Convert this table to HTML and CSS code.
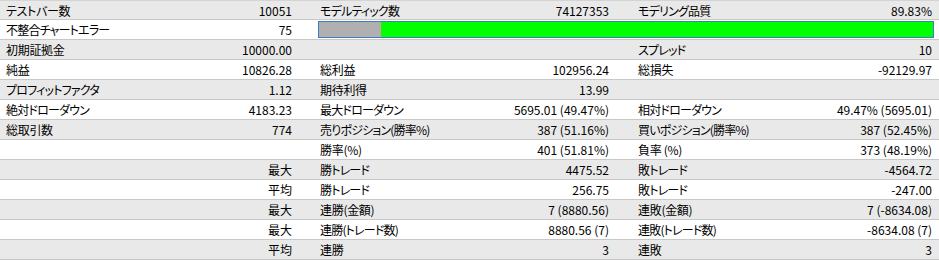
FILE: index.html
```html
<!DOCTYPE html>
<html lang="ja">
<head>
<meta charset="utf-8">
<link rel="stylesheet" href="styles.css">
</head>
<body>
<div class="report">
  <div class="row grey first">
    <div class="sec s1"><span class="lbl">テストバー数</span><span class="val">10051</span></div>
    <div class="sec s2"><span class="lbl kana">モデルティック数</span><span class="val">74127353</span></div>
    <div class="sec s3"><span class="lbl kana">モデリング品質</span><span class="val">89.83%</span></div>
  </div>
  <div class="row white">
    <div class="sec s1"><span class="lbl kana">不整合チャートエラー</span><span class="val">75</span></div>
    <div class="bar"><div class="bar-bad"></div><div class="bar-good"></div></div>
  </div>
  <div class="row grey">
    <div class="sec s1"><span class="lbl">初期証拠金</span><span class="val">10000.00</span></div>
    <div class="sec s2"><span class="lbl"></span><span class="val"></span></div>
    <div class="sec s3"><span class="lbl kana">スプレッド</span><span class="val">10</span></div>
  </div>
  <div class="row white">
    <div class="sec s1"><span class="lbl">純益</span><span class="val">10826.28</span></div>
    <div class="sec s2"><span class="lbl">総利益</span><span class="val">102956.24</span></div>
    <div class="sec s3"><span class="lbl">総損失</span><span class="val">-92129.97</span></div>
  </div>
  <div class="row grey">
    <div class="sec s1"><span class="lbl kana">プロフィットファクタ</span><span class="val">1.12</span></div>
    <div class="sec s2"><span class="lbl">期待利得</span><span class="val">13.99</span></div>
    <div class="sec s3"><span class="lbl"></span><span class="val"></span></div>
  </div>
  <div class="row white">
    <div class="sec s1"><span class="lbl kana">絶対ドローダウン</span><span class="val">4183.23</span></div>
    <div class="sec s2"><span class="lbl kana">最大ドローダウン</span><span class="val">5695.01 (49.47%)</span></div>
    <div class="sec s3"><span class="lbl kana">相対ドローダウン</span><span class="val">49.47% (5695.01)</span></div>
  </div>
  <div class="row grey">
    <div class="sec s1"><span class="lbl">総取引数</span><span class="val">774</span></div>
    <div class="sec s2"><span class="lbl kana">売りポジション(勝率%)</span><span class="val">387 (51.16%)</span></div>
    <div class="sec s3"><span class="lbl kana">買いポジション(勝率%)</span><span class="val">387 (52.45%)</span></div>
  </div>
  <div class="row white">
    <div class="sec s1"><span class="lbl"></span><span class="val"></span></div>
    <div class="sec s2"><span class="lbl">勝率(%)</span><span class="val">401 (51.81%)</span></div>
    <div class="sec s3"><span class="lbl">負率 (%)</span><span class="val">373 (48.19%)</span></div>
  </div>
  <div class="row grey">
    <div class="sec s1"><span class="lbl"></span><span class="val">最大</span></div>
    <div class="sec s2"><span class="lbl kana">勝トレード</span><span class="val">4475.52</span></div>
    <div class="sec s3"><span class="lbl kana">敗トレード</span><span class="val">-4564.72</span></div>
  </div>
  <div class="row white">
    <div class="sec s1"><span class="lbl"></span><span class="val">平均</span></div>
    <div class="sec s2"><span class="lbl kana">勝トレード</span><span class="val">256.75</span></div>
    <div class="sec s3"><span class="lbl kana">敗トレード</span><span class="val">-247.00</span></div>
  </div>
  <div class="row grey">
    <div class="sec s1"><span class="lbl"></span><span class="val">最大</span></div>
    <div class="sec s2"><span class="lbl">連勝(金額)</span><span class="val">7 (8880.56)</span></div>
    <div class="sec s3"><span class="lbl">連敗(金額)</span><span class="val">7 (-8634.08)</span></div>
  </div>
  <div class="row white">
    <div class="sec s1"><span class="lbl"></span><span class="val">最大</span></div>
    <div class="sec s2"><span class="lbl kana">連勝(トレード数)</span><span class="val">8880.56 (7)</span></div>
    <div class="sec s3"><span class="lbl kana">連敗(トレード数)</span><span class="val">-8634.08 (7)</span></div>
  </div>
  <div class="row grey">
    <div class="sec s1"><span class="lbl"></span><span class="val">平均</span></div>
    <div class="sec s2"><span class="lbl">連勝</span><span class="val">3</span></div>
    <div class="sec s3"><span class="lbl">連敗</span><span class="val">3</span></div>
  </div>
</div>
</body>
</html>
```

FILE: styles.css
```css
html, body {
  margin: 0;
  padding: 0;
  background: #ffffff;
}

body {
  width: 939px;
  height: 260px;
  overflow: hidden;
  font-family: "Noto Sans CJK JP", sans-serif;
  font-size: 12px;
  color: #000000;
  font-feature-settings: "palt";
}

.report {
  display: flex;
  flex-direction: column;
}

.row {
  box-sizing: border-box;
  height: 20px;
  border-bottom: 1px solid #c8c8c8;
  display: grid;
  grid-template-columns: 292px 317px 323px;
  padding-right: 7px;
  align-items: center;
}

.row.first {
  border-top: 1px solid #d4d4d4;
}

.grey {
  background: #e9e9e9;
}

.white {
  background: #ffffff;
}

.sec {
  display: flex;
  justify-content: space-between;
  align-items: center;
  line-height: 19px;
  white-space: nowrap;
}

.s1 {
  padding-left: 6px;
}

.s2 {
  padding-left: 28px;
}

.s3 {
  padding-left: 29px;
}

.lbl {
  letter-spacing: -0.3px;
}

.lbl.kana {
  letter-spacing: -0.8px;
}

.bar {
  grid-column: 2 / 4;
  margin-left: 26px;
  margin-right: -2px;
  height: 17px;
  box-sizing: border-box;
  border: 1px solid #3b7cc4;
  display: flex;
  align-self: start;
  margin-top: 1px;
}

.bar-bad {
  width: 61px;
  background: #b0b0b0;
  border-right: 1px solid #e79a9a;
}

.bar-good {
  flex: 1;
  background: #00ff00;
}
```
